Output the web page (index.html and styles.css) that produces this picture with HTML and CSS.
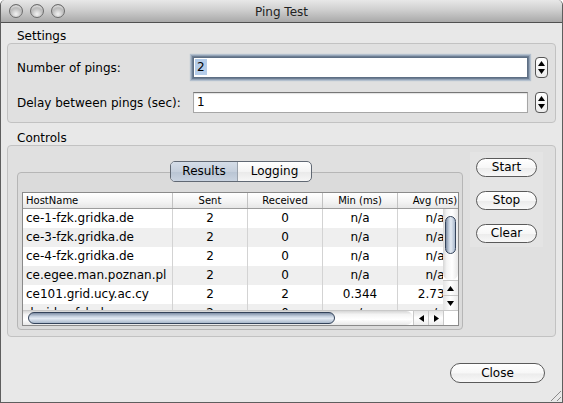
FILE: index.html
```html
<!DOCTYPE html>
<html>
<head>
<meta charset="utf-8">
<title>Ping Test</title>
<link rel="stylesheet" href="styles.css">
</head>
<body>
<div class="window">
  <div class="titlebar">
    <div class="lights"><span class="light"></span><span class="light"></span><span class="light"></span></div>
    <div class="title">Ping Test</div>
    <div></div>
  </div>
  <div class="content">
    <div class="section-label">Settings</div>
    <div class="panel settings">
      <div class="label">Number of pings:</div>
      <div class="field focus"><span class="sel">2</span></div>
      <div class="spinner">
        <svg width="7" height="5" viewBox="0 0 7 5"><path d="M3.5 0L7 5H0Z"/></svg>
        <svg width="7" height="5" viewBox="0 0 7 5"><path d="M0 0H7L3.5 5Z"/></svg>
      </div>
      <div class="label">Delay between pings (sec):</div>
      <div class="field">1</div>
      <div class="spinner">
        <svg width="7" height="5" viewBox="0 0 7 5"><path d="M3.5 0L7 5H0Z"/></svg>
        <svg width="7" height="5" viewBox="0 0 7 5"><path d="M0 0H7L3.5 5Z"/></svg>
      </div>
    </div>
    <div class="section-label second">Controls</div>
    <div class="panel controls">
      <div class="tabarea">
        <div class="tabs">
          <div class="tab active">Results</div>
          <div class="tab">Logging</div>
        </div>
        <div class="pane">
          <div class="table">
            <div class="thead">
              <div class="th host">HostName</div>
              <div class="th">Sent</div>
              <div class="th">Received</div>
              <div class="th">Min (ms)</div>
              <div class="th">Avg (ms)</div>
            </div>
            <div class="tbody">
              <div class="tr"><div class="td host">ce-1-fzk.gridka.de</div><div class="td">2</div><div class="td">0</div><div class="td">n/a</div><div class="td">n/a</div></div>
              <div class="tr alt"><div class="td host">ce-3-fzk.gridka.de</div><div class="td">2</div><div class="td">0</div><div class="td">n/a</div><div class="td">n/a</div></div>
              <div class="tr"><div class="td host">ce-4-fzk.gridka.de</div><div class="td">2</div><div class="td">0</div><div class="td">n/a</div><div class="td">n/a</div></div>
              <div class="tr alt"><div class="td host">ce.egee.man.poznan.pl</div><div class="td">2</div><div class="td">0</div><div class="td">n/a</div><div class="td">n/a</div></div>
              <div class="tr"><div class="td host">ce101.grid.ucy.ac.cy</div><div class="td">2</div><div class="td">2</div><div class="td">0.344</div><div class="td">2.735</div></div>
              <div class="tr alt"><div class="td host">dgridce.fzk.de</div><div class="td">2</div><div class="td">0</div><div class="td">n/a</div><div class="td">n/a</div></div>
            </div>
            <div class="vscroll">
              <div class="vtrack"><div class="vthumb"></div></div>
              <div class="arrow"><svg width="7" height="5" viewBox="0 0 7 5"><path d="M3.5 0L7 5H0Z"/></svg></div>
              <div class="arrow"><svg width="7" height="5" viewBox="0 0 7 5"><path d="M0 0H7L3.5 5Z"/></svg></div>
            </div>
            <div class="hscroll">
              <div class="htrack"><div class="hthumb"></div></div>
              <div class="arrow"><svg width="5" height="7" viewBox="0 0 5 7"><path d="M0 3.5L5 0V7Z"/></svg></div>
              <div class="arrow"><svg width="5" height="7" viewBox="0 0 5 7"><path d="M0 0L5 3.5L0 7Z"/></svg></div>
            </div>
            <div class="corner"></div>
          </div>
        </div>
      </div>
      <div class="btns">
        <div class="btn">Start</div>
        <div class="btn">Stop</div>
        <div class="btn">Clear</div>
      </div>
    </div>
    <div class="footer">
      <div class="btn close">Close</div>
    </div>
  </div>
  <div class="grip"></div>
</div>
</body>
</html>
```
FILE: styles.css
```css
html, body {
  margin: 0;
  padding: 0;
}
body {
  font-family: "DejaVu Sans", "Liberation Sans", sans-serif;
  font-size: 12px;
  color: #000;
  background: #fff;
}
.window {
  position: relative;
  width: 563px;
  height: 403px;
  box-sizing: border-box;
  border: 1px solid #5e5e5e;
  border-top: 0;
  border-radius: 5px 5px 0 0;
  background: #e8e8e8;
  overflow: hidden;
}
.titlebar {
  height: 22px;
  border-bottom: 1px solid #505050;
  background: linear-gradient(#e8e8e8, #cfcfcf 45%, #a9a9a9);
  border-radius: 5px 5px 0 0;
  display: grid;
  grid-template-columns: 1fr auto 1fr;
  align-items: center;
}
.lights {
  display: flex;
  gap: 7px;
  padding-left: 8px;
}
.light {
  width: 14px;
  height: 14px;
  box-sizing: border-box;
  border-radius: 50%;
  border: 1px solid #6c6c6c;
  background: radial-gradient(circle at 50% 75%, #f2f2f2 0%, #c4c4c4 45%, #8d8d8d 80%, #7a7a7a 100%);
  box-shadow: inset 0 3px 2px -1px rgba(255,255,255,0.7);
}
.title {
  font-size: 12px;
  color: #222;
  padding-top: 1px;
}
.content {
  padding: 0 6px;
}
.section-label {
  height: 14px;
  line-height: 14px;
  margin-top: 6px;
  padding-left: 10px;
}
.section-label.second {
  margin-top: 8px;
}
.panel {
  border: 1px solid #c2c2c2;
  border-radius: 4px;
  background: #e0e0e0;
}
.settings {
  display: grid;
  grid-template-columns: 169px 1fr 13px;
  column-gap: 7px;
  row-gap: 14px;
  padding: 13px 7px 9px 9px;
  align-items: center;
}
.label {
  white-space: nowrap;
}
.field {
  height: 21px;
  box-sizing: border-box;
  background: #fff;
  border: 1px solid #a6a6a6;
  border-top-color: #767676;
  box-shadow: inset 0 1px 1px rgba(0,0,0,0.12);
  padding-left: 3px;
  line-height: 19px;
}
.field.focus {
  box-shadow: 0 0 0 1px #6d7e93, 0 0 0 2px #93a3b6, 0 0 1px 3px #b4c0ce;
  border-color: #5e6f84;
  padding-left: 1px;
}
.sel {
  background: #b5cdea;
  padding: 1px 2px;
}
.spinner {
  width: 13px;
  height: 21px;
  box-sizing: border-box;
  border: 1px solid #555;
  border-radius: 4px;
  background: linear-gradient(#ffffff, #ececec);
  display: flex;
  flex-direction: column;
  align-items: center;
  justify-content: space-between;
  padding: 3px 0;
}
.spinner svg { display: block; }
.controls {
  display: flex;
  align-items: flex-start;
  gap: 7px;
  padding: 6px 12px 6px 9px;
}
.tabarea {
  width: 446px;
  margin-top: 9px;
  display: flex;
  flex-direction: column;
}
.tabs {
  align-self: center;
  display: flex;
  height: 21px;
  box-sizing: border-box;
  border: 1px solid #606873;
  border-radius: 5px;
  overflow: hidden;
  position: relative;
  z-index: 1;
  background: linear-gradient(#ffffff, #f4f4f4 50%, #e9e9e9 51%, #f6f6f6);
  margin-left: 2px;
}
.tab {
  line-height: 19px;
  text-align: center;
  font-size: 12px;
}
.tab:first-child {
  width: 66px;
  border-right: 1px solid #9aa2ac;
}
.tab:last-child {
  width: 73px;
}
.tab.active {
  background: linear-gradient(#d5dde8, #c5cfdc 50%, #b8c4d3 51%, #c9d3e0);
}
.pane {
  margin-top: -10px;
  height: 158px;
  box-sizing: border-box;
  border: 1px solid #b6b6b6;
  border-radius: 4px;
  background: #dbdbdb;
  padding: 19px 3px 3px 4px;
}
.table {
  width: 437px;
  height: 134px;
  box-sizing: border-box;
  border: 1px solid #8a8a8a;
  background: #fff;
  display: grid;
  grid-template-columns: 420px 15px;
  grid-template-rows: 16px 101px 15px;
  overflow: hidden;
}
.thead {
  grid-column: 1 / 3;
  display: flex;
  overflow: hidden;
  border-bottom: 1px solid #9c9c9c;
  background: linear-gradient(#ffffff, #f3f3f3 60%, #e6e6e6);
}
.th {
  flex: 0 0 75px;
  box-sizing: border-box;
  height: 15px;
  line-height: 15px;
  font-size: 10px;
  text-align: center;
  border-right: 1px solid #c2c2c2;
  white-space: nowrap;
}
.th.host {
  flex-basis: 150px;
  text-align: left;
  padding-left: 3px;
}
.tbody {
  overflow: hidden;
}
.tr {
  display: flex;
  height: 19px;
}
.tr.alt {
  background: #efefef;
}
.td {
  flex: 0 0 75px;
  box-sizing: border-box;
  line-height: 19px;
  text-align: center;
  border-right: 1px solid #d3d3d3;
  white-space: nowrap;
}
.td.host {
  flex-basis: 150px;
  text-align: left;
  padding-left: 3px;
}
.vscroll {
  display: flex;
  flex-direction: column;
  background: #fff;
}
.vtrack {
  flex: 1;
  background: linear-gradient(90deg, #d6d6d6, #f4f4f4 25%, #ffffff 60%, #e8e8e8);
  border-radius: 0 0 7px 7px;
  padding-top: 7px;
  box-sizing: border-box;
}
.vthumb {
  width: 11px;
  height: 38px;
  margin-left: 2px;
  box-sizing: border-box;
  border: 1px solid #34435a;
  border-radius: 6px;
  background: linear-gradient(90deg, #7e8ea5, #c9d4e2 35%, #e3eaf3 55%, #a9b8cb);
}
.arrow {
  height: 15px;
  flex: 0 0 15px;
  display: flex;
  align-items: center;
  justify-content: center;
  background: linear-gradient(90deg, #e4e4e4, #ffffff 50%, #ececec);
  border-top: 1px solid #c8c8c8;
  box-sizing: border-box;
}
.arrow svg { display: block; }
.hscroll {
  display: flex;
  background: #fff;
  border-top: 1px solid #c8c8c8;
  box-sizing: border-box;
}
.htrack {
  flex: 1;
  background: linear-gradient(#d6d6d6, #f4f4f4 25%, #ffffff 60%, #e8e8e8);
  border-radius: 0 7px 7px 0;
  padding-top: 1px;
  padding-left: 5px;
  box-sizing: border-box;
}
.hthumb {
  width: 307px;
  height: 12px;
  box-sizing: border-box;
  border: 1px solid #34435a;
  border-radius: 6px;
  background: linear-gradient(#7e8ea5, #c9d4e2 35%, #e3eaf3 55%, #a9b8cb);
}
.hscroll .arrow {
  width: 15px;
  height: auto;
  border-top: 0;
  border-left: 1px solid #c8c8c8;
  background: linear-gradient(#e4e4e4, #ffffff 50%, #ececec);
}
.corner {
  background: #fff;
  border-top: 1px solid #c8c8c8;
  border-left: 1px solid #c8c8c8;
}
.btns {
  width: 73px;
  box-sizing: border-box;
  padding: 6px 6px 4px;
  background: #e4e4e4;
  display: flex;
  flex-direction: column;
  gap: 14px;
}
.btn {
  width: 61px;
  height: 19px;
  box-sizing: border-box;
  border: 1px solid #5a5a5a;
  border-radius: 10px;
  background: linear-gradient(#ffffff, #f7f7f7 50%, #ececec 55%, #f8f8f8);
  text-align: center;
  line-height: 17px;
  font-size: 12px;
}
.footer {
  display: flex;
  justify-content: flex-end;
  padding-top: 26px;
  padding-right: 11px;
}
.btn.close {
  width: 95px;
  height: 20px;
  line-height: 18px;
}
.grip {
  position: absolute;
  right: 1px;
  bottom: 1px;
  width: 13px;
  height: 13px;
  background: repeating-linear-gradient(135deg, transparent 0 3px, #8a8a8a 3px 4px);
  clip-path: polygon(100% 0, 100% 100%, 0 100%);
}
```
